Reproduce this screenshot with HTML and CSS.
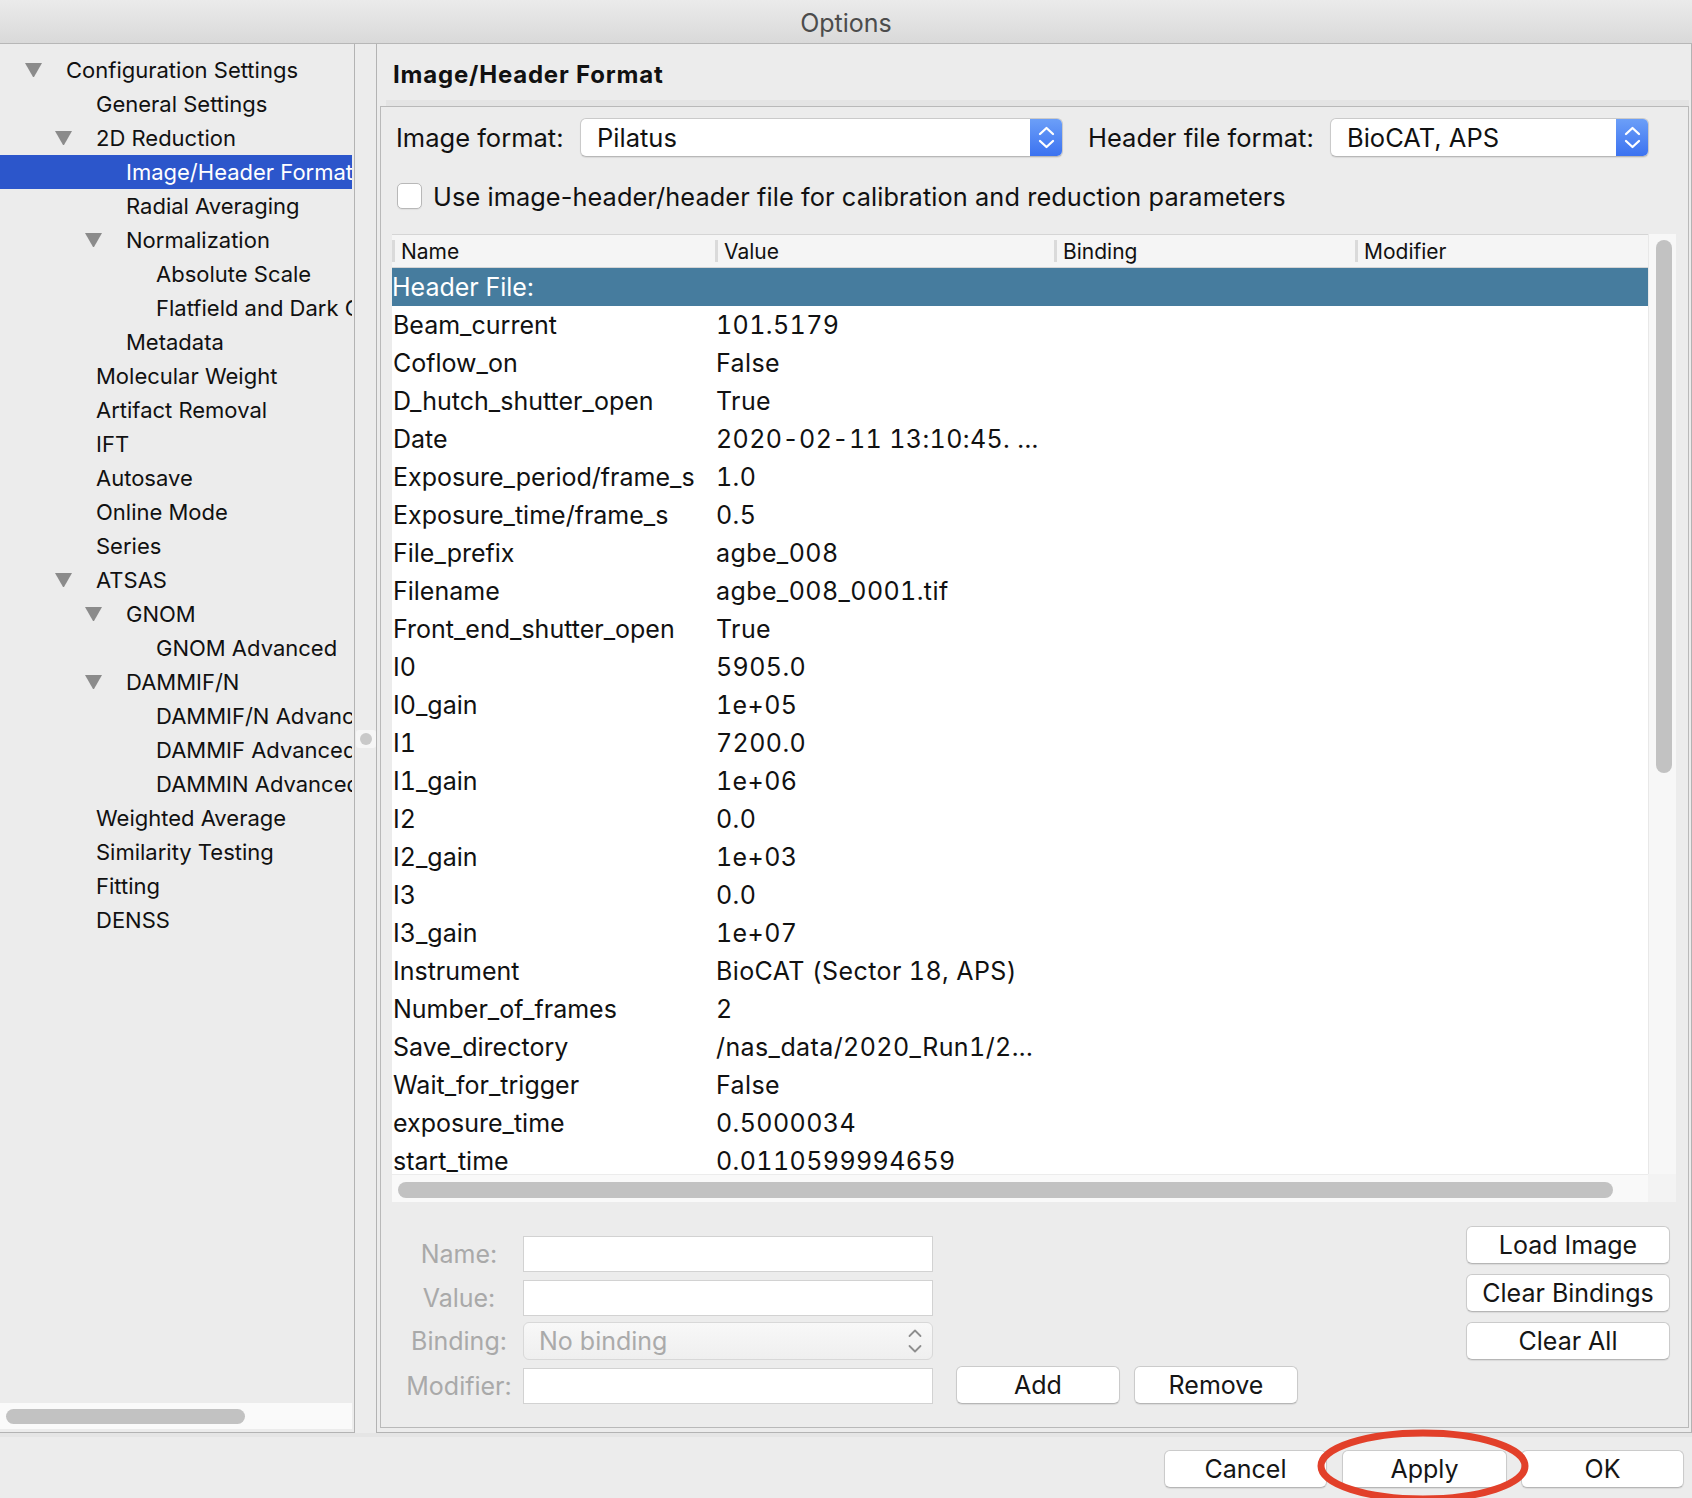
FILE: index.html
```html
<!DOCTYPE html>
<html lang="en">
<head>
<meta charset="utf-8">
<title>Options</title>
<link rel="stylesheet" href="styles.css">
</head>
<body>
<div class="window">
  <div class="titlebar">Options</div>
  <div class="main">
    <aside class="sidebar">
      <div class="tree">
        <div class="node l0"><span class="tri open"></span>Configuration Settings</div>
        <div class="node l1"><span class="tri"></span>General Settings</div>
        <div class="node l1"><span class="tri open"></span>2D Reduction</div>
        <div class="node l2 sel"><span class="tri"></span>Image/Header Format</div>
        <div class="node l2"><span class="tri"></span>Radial Averaging</div>
        <div class="node l2"><span class="tri open"></span>Normalization</div>
        <div class="node l3"><span class="tri"></span>Absolute Scale</div>
        <div class="node l3"><span class="tri"></span>Flatfield and Dark Correction</div>
        <div class="node l2"><span class="tri"></span>Metadata</div>
        <div class="node l1"><span class="tri"></span>Molecular Weight</div>
        <div class="node l1"><span class="tri"></span>Artifact Removal</div>
        <div class="node l1"><span class="tri"></span>IFT</div>
        <div class="node l1"><span class="tri"></span>Autosave</div>
        <div class="node l1"><span class="tri"></span>Online Mode</div>
        <div class="node l1"><span class="tri"></span>Series</div>
        <div class="node l1"><span class="tri open"></span>ATSAS</div>
        <div class="node l2"><span class="tri open"></span>GNOM</div>
        <div class="node l3"><span class="tri"></span>GNOM Advanced</div>
        <div class="node l2"><span class="tri open"></span>DAMMIF/N</div>
        <div class="node l3"><span class="tri"></span>DAMMIF/N Advanced</div>
        <div class="node l3"><span class="tri"></span>DAMMIF Advanced</div>
        <div class="node l3"><span class="tri"></span>DAMMIN Advanced</div>
        <div class="node l1"><span class="tri"></span>Weighted Average</div>
        <div class="node l1"><span class="tri"></span>Similarity Testing</div>
        <div class="node l1"><span class="tri"></span>Fitting</div>
        <div class="node l1"><span class="tri"></span>DENSS</div>
      </div>
      <div class="side-hscroll"><div class="thumb side-thumb"></div></div>
    </aside>

    <div class="splitter"><div class="grip"></div></div>

    <section class="content">
      <h1 class="heading">Image/Header Format</h1>
      <div class="band"></div>
      <div class="group">
        <div class="formats">
          <span class="flabel flabel-img">Image format:</span>
          <div class="combo combo-img">
            <span class="combo-text">Pilatus</span>
            <span class="stepper">
              <svg width="33" height="39" viewBox="0 0 33 39"><path d="M10 16 L16.5 10 L23 16 M10 23 L16.5 29 L23 23" fill="none" stroke="#fff" stroke-width="2.3" stroke-linecap="round" stroke-linejoin="round"/></svg>
            </span>
          </div>
          <span class="flabel flabel-hdr">Header file format:</span>
          <div class="combo combo-hdr">
            <span class="combo-text">BioCAT, APS</span>
            <span class="stepper">
              <svg width="33" height="39" viewBox="0 0 33 39"><path d="M10 16 L16.5 10 L23 16 M10 23 L16.5 29 L23 23" fill="none" stroke="#fff" stroke-width="2.3" stroke-linecap="round" stroke-linejoin="round"/></svg>
            </span>
          </div>
        </div>

        <div class="check-row">
          <span class="cb"></span>
          <span class="check-text">Use image-header/header file for calibration and reduction parameters</span>
        </div>

        <div class="table">
          <div class="viewport">
            <div class="thead">
              <div class="th">Name</div>
              <div class="th">Value</div>
              <div class="th">Binding</div>
              <div class="th">Modifier</div>
            </div>
            <div class="tr section-row">Header File:</div>
            <div class="tr"><span class="c1">Beam_current</span><span class="c2">101.5179</span><span></span><span></span></div>
            <div class="tr"><span class="c1">Coflow_on</span><span class="c2">False</span><span></span><span></span></div>
            <div class="tr"><span class="c1">D_hutch_shutter_open</span><span class="c2">True</span><span></span><span></span></div>
            <div class="tr"><span class="c1">Date</span><span class="c2">2020-02-11 13:10:45. ...</span><span></span><span></span></div>
            <div class="tr"><span class="c1">Exposure_period/frame_s</span><span class="c2">1.0</span><span></span><span></span></div>
            <div class="tr"><span class="c1">Exposure_time/frame_s</span><span class="c2">0.5</span><span></span><span></span></div>
            <div class="tr"><span class="c1">File_prefix</span><span class="c2">agbe_008</span><span></span><span></span></div>
            <div class="tr"><span class="c1">Filename</span><span class="c2">agbe_008_0001.tif</span><span></span><span></span></div>
            <div class="tr"><span class="c1">Front_end_shutter_open</span><span class="c2">True</span><span></span><span></span></div>
            <div class="tr"><span class="c1">I0</span><span class="c2">5905.0</span><span></span><span></span></div>
            <div class="tr"><span class="c1">I0_gain</span><span class="c2">1e+05</span><span></span><span></span></div>
            <div class="tr"><span class="c1">I1</span><span class="c2">7200.0</span><span></span><span></span></div>
            <div class="tr"><span class="c1">I1_gain</span><span class="c2">1e+06</span><span></span><span></span></div>
            <div class="tr"><span class="c1">I2</span><span class="c2">0.0</span><span></span><span></span></div>
            <div class="tr"><span class="c1">I2_gain</span><span class="c2">1e+03</span><span></span><span></span></div>
            <div class="tr"><span class="c1">I3</span><span class="c2">0.0</span><span></span><span></span></div>
            <div class="tr"><span class="c1">I3_gain</span><span class="c2">1e+07</span><span></span><span></span></div>
            <div class="tr"><span class="c1">Instrument</span><span class="c2">BioCAT (Sector 18, APS)</span><span></span><span></span></div>
            <div class="tr"><span class="c1">Number_of_frames</span><span class="c2">2</span><span></span><span></span></div>
            <div class="tr"><span class="c1">Save_directory</span><span class="c2">/nas_data/2020_Run1/2...</span><span></span><span></span></div>
            <div class="tr"><span class="c1">Wait_for_trigger</span><span class="c2">False</span><span></span><span></span></div>
            <div class="tr"><span class="c1">exposure_time</span><span class="c2">0.5000034</span><span></span><span></span></div>
            <div class="tr"><span class="c1">start_time</span><span class="c2">0.0110599994659</span><span></span><span></span></div>
          </div>
          <div class="vscroll"><div class="thumb v-thumb"></div></div>
          <div class="hscroll"><div class="thumb h-thumb"></div></div>
          <div class="corner"></div>
        </div>

        <div class="editor">
          <div class="fields">
            <span class="lab">Name:</span>
            <span class="input"></span>
            <span></span>
            <span class="lab">Value:</span>
            <span class="input"></span>
            <span></span>
            <span class="lab lab-tall">Binding:</span>
            <span class="select">
              <span>No binding</span>
              <svg width="16" height="28" viewBox="0 0 16 28"><path d="M2.5 9 L8 3.5 L13.5 9 M2.5 19 L8 24.5 L13.5 19" fill="none" stroke="#8e8e8e" stroke-width="1.8" stroke-linecap="round" stroke-linejoin="round"/></svg>
            </span>
            <span></span>
            <span class="lab">Modifier:</span>
            <span class="input"></span>
            <span class="pair">
              <button class="btn btn-add">Add</button>
              <button class="btn btn-remove">Remove</button>
            </span>
          </div>
          <div class="side">
            <button class="btn">Load Image</button>
            <button class="btn">Clear Bindings</button>
            <button class="btn">Clear All</button>
          </div>
        </div>
      </div>
    </section>
  </div>

  <div class="footer">
    <button class="btn btn-cancel">Cancel</button>
    <button class="btn btn-apply">Apply</button>
    <button class="btn btn-ok">OK</button>
    <svg class="mark" width="218" height="80" viewBox="0 0 218 80"><ellipse cx="109" cy="39" rx="102" ry="33" fill="none" stroke="#e2402a" stroke-width="7"/></svg>
  </div>
</div>
</body>
</html>
```
FILE: styles.css
```css
* {
  box-sizing: border-box;
  margin: 0;
  padding: 0;
}

html, body {
  width: 1692px;
  height: 1498px;
  overflow: hidden;
}

body {
  background: #ececec;
  font-family: Inter, "Noto Sans", "Liberation Sans", sans-serif;
  color: #111;
}

.window {
  display: flex;
  flex-direction: column;
  height: 1498px;
}

/* ---------- title bar ---------- */
.titlebar {
  height: 44px;
  flex: none;
  border-bottom: 1px solid #b7b7b7;
  background: linear-gradient(#ebebeb, #d9d9d9);
  text-align: center;
  font-size: 25px;
  line-height: 41px;
  padding-top: 3px;
  color: #4c4c4c;
}

.main {
  display: flex;
  height: 1389px;
  flex: none;
}

/* ---------- sidebar tree ---------- */
.sidebar {
  width: 355px;
  flex: none;
  border-right: 1px solid #b3b3b3;
  border-bottom: 1px solid #b3b3b3;
  display: flex;
  flex-direction: column;
}

.tree {
  flex: 1;
  width: 352px;
  overflow: hidden;
  padding-top: 9px;
  font-size: 22px;
}

.node {
  height: 34px;
  display: flex;
  align-items: center;
  white-space: nowrap;
  padding-left: 25px;
}

.node.l1 { padding-left: 55px; }
.node.l2 { padding-left: 85px; }
.node.l3 { padding-left: 115px; }

.node.sel {
  background: #2c56cb;
  color: #fff;
}

.tri {
  flex: none;
  width: 17px;
  height: 14px;
  margin-right: 24px;
}

.tri.open {
  border-left: 8.5px solid transparent;
  border-right: 8.5px solid transparent;
  border-top: 14px solid #8b8b8b;
}

.side-hscroll {
  height: 26px;
  width: 352px;
  margin-bottom: 3px;
  background: #fafafa;
  padding: 6px 0 0 6px;
}

.thumb {
  background: #c2c2c2;
  border-radius: 8px;
}

.side-thumb {
  width: 239px;
  height: 15px;
}

/* ---------- splitter ---------- */
.splitter {
  width: 21px;
  flex: none;
  display: flex;
  justify-content: center;
  padding-top: 686px;
}

.grip {
  width: 20px;
  height: 18px;
  background: #f6f6f6;
  border-radius: 3px;
  display: flex;
  align-items: center;
  justify-content: center;
}

.grip::after {
  content: "";
  width: 12px;
  height: 12px;
  border-radius: 50%;
  background: #c9c9c9;
}

/* ---------- content panel ---------- */
.content {
  flex: 1;
  border-left: 1px solid #b3b3b3;
  border-right: 1px solid #b3b3b3;
  border-bottom: 1px solid #b3b3b3;
  display: flex;
  flex-direction: column;
  padding: 0 2px 4px 3px;
}

.heading {
  margin-top: 6px;
  height: 50px;
  line-height: 50px;
  font-size: 24px;
  letter-spacing: 0.8px;
  font-weight: 700;
  padding-left: 13px;
  color: #111;
}

.band {
  height: 6px;
  margin-left: 6px;
  background: #e4e4e4;
}

.group {
  flex: 1;
  border: 1px solid #b9b9b9;
  display: flex;
  flex-direction: column;
}

.formats {
  margin-top: 11px;
  height: 39px;
  display: flex;
  align-items: center;
  padding-left: 15px;
  font-size: 25.5px;
}

.flabel {
  white-space: nowrap;
}

.flabel-img { width: 184px; }
.flabel-hdr { width: 242px; margin-left: 25px; }

.combo {
  height: 39px;
  display: flex;
  align-items: center;
  background: #fff;
  border: 1px solid #cacaca;
  border-bottom-color: #b8b8b8;
  border-radius: 6px;
  box-shadow: 0 1px 1px rgba(0, 0, 0, 0.08);
  overflow: hidden;
}

.combo-img { width: 483px; }
.combo-hdr { width: 319px; }

.combo-text {
  flex: 1;
  padding-left: 16px;
}

.stepper {
  width: 33px;
  height: 39px;
  flex: none;
  margin: -1px -1px -1px 0;
  background: linear-gradient(#6da0f8, #3a71f0);
  display: flex;
}

.check-row {
  margin-top: 26px;
  height: 26px;
  display: flex;
  align-items: center;
  padding-left: 16px;
  font-size: 25.3px;
  letter-spacing: 0.1px;
}

.cb {
  width: 25px;
  height: 26px;
  background: #fff;
  border: 1px solid #b8b8b8;
  border-radius: 5px;
  box-shadow: 0 1px 1px rgba(0, 0, 0, 0.06);
  margin-right: 11px;
}

.check-text {
  white-space: nowrap;
}

/* ---------- table ---------- */
.table {
  margin: 25px 0 0 11px;
  width: 1284px;
  height: 968px;
  display: grid;
  grid-template-columns: 1256px 28px;
  grid-template-rows: 940px 28px;
}

.viewport {
  overflow: hidden;
  background: #fff;
}

.thead {
  display: grid;
  grid-template-columns: 323px 339px 301px 293px;
  height: 34px;
  background: #f5f5f5;
  border-top: 1px solid #d5d5d5;
  border-bottom: 1px solid #d5d5d5;
  font-size: 21px;
}

.th {
  display: flex;
  align-items: center;
  padding-left: 9px;
  background: linear-gradient(#dadada, #dadada) left center / 3px 22px no-repeat;
}

.tr {
  display: grid;
  grid-template-columns: 323px 339px 301px 293px;
  height: 38px;
  align-items: center;
  font-size: 25px;
  white-space: nowrap;
  font-variant-numeric: tabular-nums;
}

.tr .c1 { padding-left: 1px; overflow: hidden; }
.tr .c2 { padding-left: 1px; letter-spacing: 0.4px; }

.tr.section-row {
  display: flex;
  background: #467c9e;
  color: #fff;
}

.vscroll {
  grid-column: 2;
  grid-row: 1;
  background: #f7f7f7;
  border-left: 1px solid #e8e8e8;
  padding: 6px 0 0 7px;
}

.v-thumb {
  width: 16px;
  height: 533px;
}

.hscroll {
  grid-column: 1;
  grid-row: 2;
  background: #f9f9f9;
  border-top: 1px solid #ececec;
  padding: 7px 0 0 6px;
}

.h-thumb {
  width: 1215px;
  height: 16px;
}

.corner {
  grid-column: 2;
  grid-row: 2;
  background: #f3f3f3;
}

/* ---------- editor ---------- */
.editor {
  margin-top: 24px;
  height: 178px;
  display: flex;
  padding: 0 18px 0 19px;
  font-size: 25px;
}

.fields {
  margin-top: 10px;
  display: grid;
  grid-template-columns: 118px 410px auto;
  grid-template-rows: 36px 44px 44px 44px;
  column-gap: 5px;
  align-items: end;
}

.lab {
  height: 36px;
  display: flex;
  align-items: center;
  justify-content: center;
  color: #a9a9a9;
}

.lab-tall { height: 38px; }

.input {
  height: 36px;
  background: #fff;
  border: 1px solid #d2d2d2;
}

.select {
  height: 38px;
  display: flex;
  align-items: center;
  justify-content: space-between;
  padding: 0 9px 0 15px;
  background: linear-gradient(#f8f8f8, #efefef);
  border: 1px solid #d8d8d8;
  border-radius: 6px;
  color: #aaaaaa;
}

.pair {
  display: flex;
  gap: 14px;
  margin-left: 18px;
}

.btn {
  height: 38px;
  display: flex;
  align-items: center;
  justify-content: center;
  background: #fff;
  border: 1px solid #cbcbcb;
  border-bottom-color: #b6b6b6;
  border-radius: 6px;
  box-shadow: 0 1px 1px rgba(0, 0, 0, 0.08);
  font-family: inherit;
  font-size: 25px;
  color: #151515;
}

.btn-add, .btn-remove { width: 164px; }

.side {
  margin-left: auto;
  width: 204px;
  display: flex;
  flex-direction: column;
  gap: 10px;
}

/* ---------- footer ---------- */
.footer {
  position: relative;
  height: 65px;
  flex: none;
  display: flex;
  justify-content: flex-end;
  align-items: flex-start;
  border-top: 4px solid #e5e5e5;
  padding: 13px 8px 0 0;
}

.btn-cancel { width: 163px; }
.btn-apply { width: 165px; margin-left: 15px; }
.btn-ok { width: 163px; margin-left: 14px; }

.mark {
  position: absolute;
  left: 1314px;
  top: -10px;
  overflow: visible;
}
```
